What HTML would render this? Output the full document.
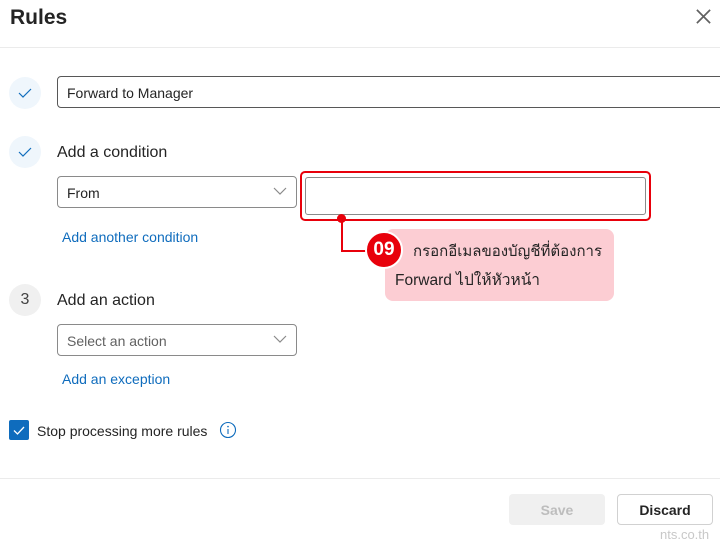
<!DOCTYPE html>
<html><head><meta charset="utf-8"><style>
*{margin:0;padding:0;box-sizing:border-box}
body{width:720px;height:544px;background:#fff;position:relative;overflow:hidden;font-family:"Segoe UI","Liberation Sans","DejaVu Sans",sans-serif;color:#242424}
.a{position:absolute}
.circ{position:absolute;width:32px;height:32px;border-radius:50%;background:#eff6fc;display:flex;align-items:center;justify-content:center}
.inp{position:absolute;border:1px solid #8a8a8a;border-radius:4px;background:#fff;font-size:14px;display:flex;align-items:center;padding-left:9px}
.lbl{position:absolute;font-size:16px;line-height:20px}
.link{position:absolute;font-size:14px;color:#0f6cbd;line-height:18px}
.chev{position:absolute;right:9px;top:10px}
</style></head><body>
<div class="a" style="left:10px;top:4px;font-size:21px;font-weight:600;line-height:28px;color:#242424">Rules</div>
<svg class="a" style="left:695px;top:8px" width="17" height="17" viewBox="0 0 18 18"><path d="M2 2L16 16M16 2L2 16" stroke="#616161" stroke-width="1.8"/></svg>
<div class="a" style="left:0;top:47px;width:720px;height:1px;background:#ebebeb"></div>

<div class="circ" style="left:9px;top:77px"><svg width="14" height="10" viewBox="0 0 14 10"><path d="M1 5L5 9L13 1" fill="none" stroke="#0f6cbd" stroke-width="1.2"/></svg></div>
<div class="inp" style="left:57px;top:76px;width:680px;height:32px;border-color:#575757;color:#242424;padding-top:2px">Forward to Manager</div>

<div class="circ" style="left:9px;top:136px"><svg width="14" height="10" viewBox="0 0 14 10"><path d="M1 5L5 9L13 1" fill="none" stroke="#0f6cbd" stroke-width="1.2"/></svg></div>
<div class="lbl" style="left:57px;top:143px">Add a condition</div>
<div class="inp" style="left:57px;top:176px;width:240px;height:32px;color:#242424;padding-top:2px">From<svg class="chev" width="14" height="9" viewBox="0 0 14 9"><path d="M1 1L7 7L13 1" fill="none" stroke="#8a8a8a" stroke-width="1.2"/></svg></div>
<div class="a" style="left:300px;top:171px;width:351px;height:50px;border:2px solid #e8000b;border-radius:5px"></div>
<div class="a" style="left:305px;top:177px;width:341px;height:38px;border:1px solid #8a8a8a;border-radius:3px"></div>
<div class="link" style="left:62px;top:228px">Add another condition</div>

<div class="a" style="left:341px;top:218px;width:2px;height:34px;background:#e8000b"></div>
<div class="a" style="left:341px;top:250px;width:30px;height:2px;background:#e8000b"></div>
<div class="a" style="left:337px;top:214px;width:9px;height:9px;border-radius:50%;background:#e8000b"></div>
<div class="a" style="left:385px;top:229px;width:229px;height:72px;background:#fccdd3;border-radius:8px"></div>
<div class="a" style="left:365px;top:231px;width:38px;height:38px;border-radius:50%;background:#e8000b;border:2px solid #fff;color:#fff;font-weight:bold;font-size:19px;display:flex;align-items:center;justify-content:center;font-family:'Liberation Sans',sans-serif">09</div>
<div class="a" style="left:413px;top:241px;font-size:15px;line-height:22px;color:#242424;font-family:'Liberation Sans','DejaVu Sans','Noto Sans CJK SC',sans-serif">กรอกอีเมลของบัญชีที่ต้องการ</div>
<div class="a" style="left:395px;top:270px;font-size:15.5px;line-height:22px;color:#242424;font-family:'Liberation Sans','DejaVu Sans','Noto Sans CJK SC',sans-serif">Forward ไปให้หัวหน้า</div>

<div class="circ" style="left:9px;top:284px;background:#f0f0f0;font-size:16px;color:#424242">3</div>
<div class="lbl" style="left:57px;top:291px">Add an action</div>
<div class="inp" style="left:57px;top:324px;width:240px;height:32px;color:#616161;padding-top:2px">Select an action<svg class="chev" width="14" height="9" viewBox="0 0 14 9"><path d="M1 1L7 7L13 1" fill="none" stroke="#8a8a8a" stroke-width="1.2"/></svg></div>
<div class="link" style="left:62px;top:370px">Add an exception</div>

<div class="a" style="left:9px;top:420px;width:20px;height:20px;background:#0f6cbd;border-radius:2px;display:flex;align-items:center;justify-content:center"><svg width="12" height="9" viewBox="0 0 12 9"><path d="M1 4.5L4.5 8L11 1" fill="none" stroke="#fff" stroke-width="1.3"/></svg></div>
<div class="a" style="left:37px;top:422px;font-size:14px;line-height:18px">Stop processing more rules</div>
<svg class="a" style="left:219px;top:421px" width="18" height="18" viewBox="0 0 18 18"><circle cx="9" cy="9" r="7.5" fill="none" stroke="#0f6cbd" stroke-width="1.1"/><path d="M9 8V13" stroke="#0f6cbd" stroke-width="1.1"/><circle cx="9" cy="5.6" r="0.8" fill="#0f6cbd"/></svg>

<div class="a" style="left:0;top:478px;width:720px;height:1px;background:#ebebeb"></div>
<div class="a" style="left:509px;top:494px;width:96px;height:31px;background:#f0f0f0;border-radius:4px;color:#bdbdbd;font-size:14px;font-weight:600;display:flex;align-items:center;justify-content:center">Save</div>
<div class="a" style="left:617px;top:494px;width:96px;height:31px;border:1px solid #d1d1d1;border-radius:4px;color:#242424;font-size:14px;font-weight:600;display:flex;align-items:center;justify-content:center">Discard</div>
<div class="a" style="left:660px;top:527px;font-size:13px;color:#c8c8c8;line-height:16px">nts.co.th</div>
</body></html>
